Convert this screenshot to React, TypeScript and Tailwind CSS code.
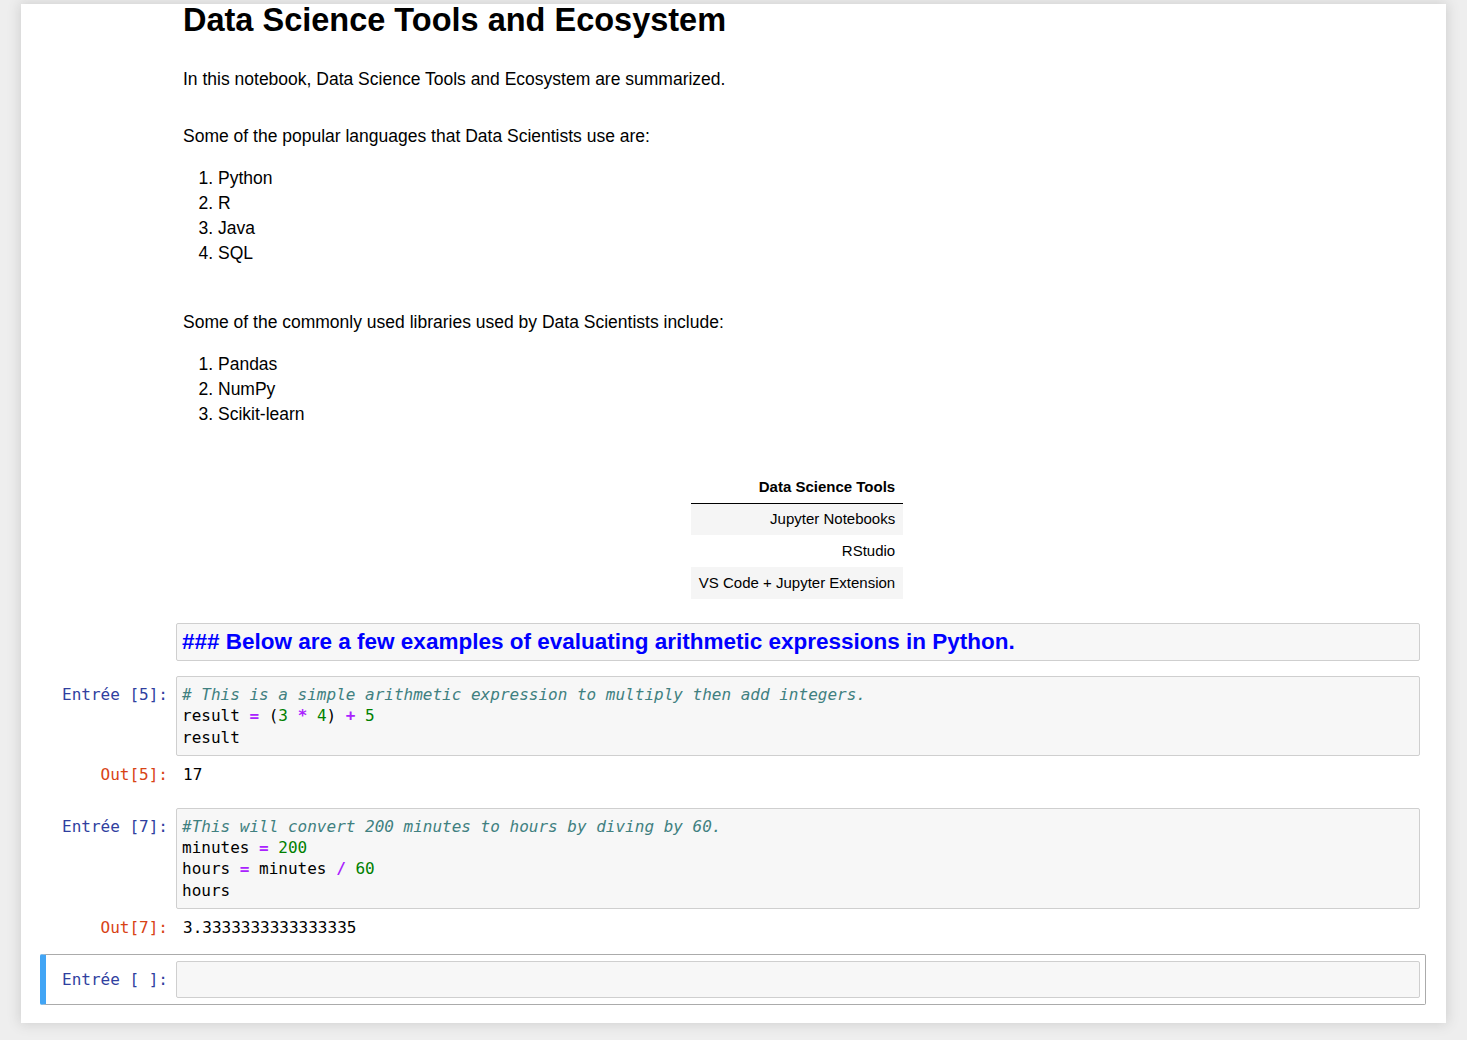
import React from "react";

const sans = "font-['Liberation_Sans',Arial,sans-serif]";
const mono = "font-['DejaVu_Sans_Mono','Liberation_Mono',monospace]";

const tools = ["Jupyter Notebooks", "RStudio", "VS Code + Jupyter Extension"];

const Op = ({ children }: { children: React.ReactNode }) => (
  <span className="text-[#AA22FF] font-bold">{children}</span>
);
const Num = ({ children }: { children: React.ReactNode }) => (
  <span className="text-[#008000]">{children}</span>
);
const Comment = ({ children }: { children: React.ReactNode }) => (
  <span className="text-[#408080] italic">{children}</span>
);

const Prompt = ({ label, out }: { label: string; out?: boolean }) => (
  <div
    className={`w-[130px] shrink-0 pr-[8px] text-right whitespace-pre ${mono} text-[16px] leading-[21.5px] ${
      out ? "text-[#D84315]" : "text-[#303F9F]"
    }`}
  >
    {label}
  </div>
);

const CodeCell = ({
  n,
  lines,
  output,
  mt,
}: {
  n: string;
  lines: React.ReactNode[];
  output: string;
  mt: string;
}) => (
  <div className={`ml-[19px] w-[1386px] pl-[6px] pr-[6px] ${mt}`}>
    <div className="flex">
      <div className="pt-[8px]">
        <Prompt label={`Entrée [${n}]:`} />
      </div>
      <div
        className={`flex-1 bg-[#f7f7f7] border border-[#cfcfcf] rounded-[2px] px-[5px] py-[7px] ${mono} text-[16px] leading-[21.3px] text-black whitespace-pre`}
      >
        {lines.map((l, i) => (
          <div key={i}>{l}</div>
        ))}
      </div>
    </div>
    <div className="flex mt-[8px]">
      <Prompt label={`Out[${n}]:`} out />
      <div className={`pl-[7px] ${mono} text-[16px] leading-[21.5px] text-black`}>{output}</div>
    </div>
  </div>
);

export default function App() {
  return (
    <div className={`min-h-[1040px] bg-[#eeeeee] pt-[4px] ${sans}`}>
      <div className="ml-[21px] w-[1425px] bg-white shadow-[0_0_12px_1px_rgba(87,87,87,0.2)] pb-[18px]">
        {/* rendered markdown */}
        <div className="pl-[162px] text-black">
          <h1 className="text-[32.5px] font-bold leading-[32px]">Data Science Tools and Ecosystem</h1>
          <p className="mt-[31px] text-[17.5px] leading-[25px]">
            In this notebook, Data Science Tools and Ecosystem are summarized.
          </p>
          <p className="mt-[32px] text-[17.5px] leading-[25px]">
            Some of the popular languages that Data Scientists use are:
          </p>
          <ol className="mt-[17px] list-decimal pl-[35px] text-[17.5px] leading-[25px]">
            <li>Python</li>
            <li>R</li>
            <li>Java</li>
            <li>SQL</li>
          </ol>
          <p className="mt-[44px] text-[17.5px] leading-[25px]">
            Some of the commonly used libraries used by Data Scientists include:
          </p>
          <ol className="mt-[17px] list-decimal pl-[35px] text-[17.5px] leading-[25px]">
            <li>Pandas</li>
            <li>NumPy</li>
            <li>Scikit-learn</li>
          </ol>
        </div>

        <div className="mt-[44px] pl-[153px] w-[1399px] flex justify-center">
          <table className="text-[15px] text-black border-collapse">
            <thead>
              <tr className="border-b border-black">
                <th className="h-[32px] px-[8px] text-right font-bold">Data Science Tools</th>
              </tr>
            </thead>
            <tbody>
              {tools.map((t, i) => (
                <tr key={t} className={i % 2 === 0 ? "bg-[#f5f5f5]" : "bg-white"}>
                  <td className="h-[32px] px-[8px] text-right">{t}</td>
                </tr>
              ))}
            </tbody>
          </table>
        </div>

        {/* markdown cell in edit mode */}
        <div className="ml-[19px] w-[1386px] pl-[136px] pr-[6px] mt-[24px]">
          <div className="bg-[#f7f7f7] border border-[#cfcfcf] rounded-[2px] px-[5px] h-[38px] flex items-center">
            <span className="text-[#0000FF] font-bold text-[22.5px] leading-[36px]">
              ### Below are a few examples of evaluating arithmetic expressions in Python.
            </span>
          </div>
        </div>

        <CodeCell
          n="5"
          mt="mt-[15px]"
          lines={[
            <Comment># This is a simple arithmetic expression to multiply then add integers.</Comment>,
            <>
              result <Op>=</Op> (<Num>3</Num> <Op>*</Op> <Num>4</Num>) <Op>+</Op> <Num>5</Num>
            </>,
            <>result</>,
          ]}
          output="17"
        />

        <CodeCell
          n="7"
          mt="mt-[22.5px]"
          lines={[
            <Comment>#This will convert 200 minutes to hours by diving by 60.</Comment>,
            <>
              minutes <Op>=</Op> <Num>200</Num>
            </>,
            <>
              hours <Op>=</Op> minutes <Op>/</Op> <Num>60</Num>
            </>,
            <>hours</>,
          ]}
          output="3.3333333333333335"
        />

        {/* selected empty cell */}
        <div className="ml-[19px] w-[1386px] mt-[15.5px] border border-[#ababab] border-l-[6px] border-l-[#42A5F5] rounded-[2px] pr-[5px] py-[6px] flex">
          <div className="pt-[8px]">
            <Prompt label="Entrée [ ]:" />
          </div>
          <div className="flex-1 h-[37px] bg-[#f7f7f7] border border-[#cfcfcf] rounded-[2px]" />
        </div>
      </div>
    </div>
  );
}
